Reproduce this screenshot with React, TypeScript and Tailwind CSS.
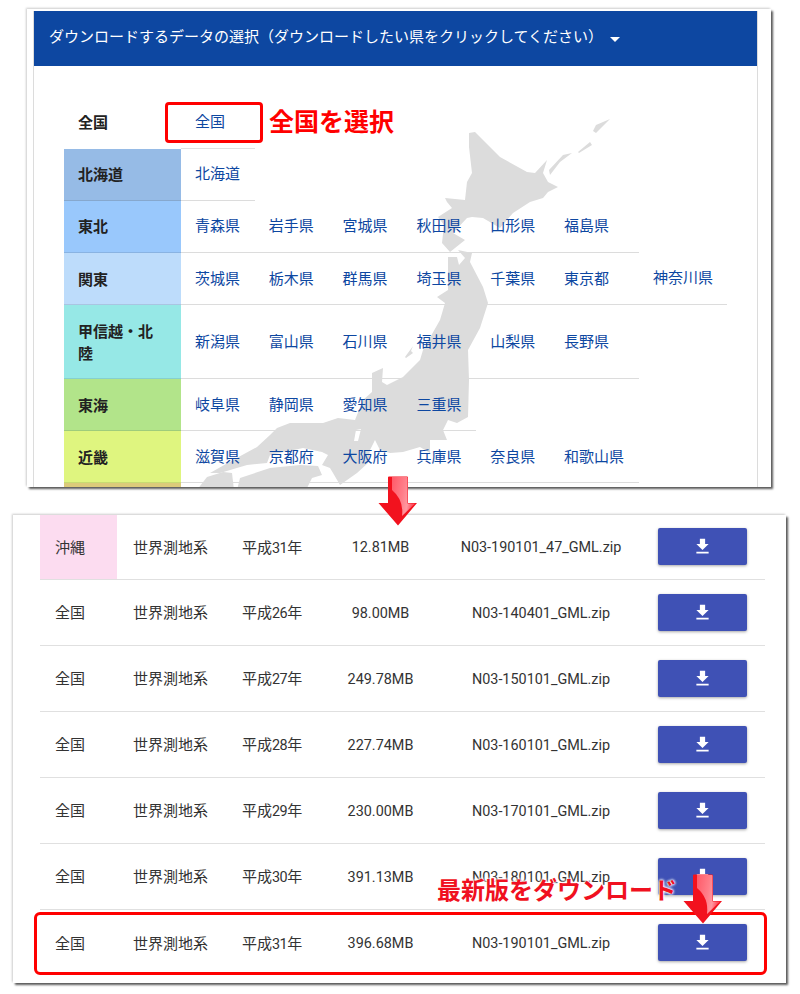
const prefRows: { label: string; bg: string; h: string; cells: string[] }[] = [
  { label: "北海道", bg: "bg-[#96bbe6]", h: "h-[52px]", cells: ["北海道"] },
  { label: "東北", bg: "bg-[#99c8fc]", h: "h-[52px]", cells: ["青森県", "岩手県", "宮城県", "秋田県", "山形県", "福島県"] },
  { label: "関東", bg: "bg-[#bddcfb]", h: "h-[52px]", cells: ["茨城県", "栃木県", "群馬県", "埼玉県", "千葉県", "東京都", "神奈川県"] },
  { label: "甲信越・北陸", bg: "bg-[#96e8e6]", h: "h-[74px]", cells: ["新潟県", "富山県", "石川県", "福井県", "山梨県", "長野県"] },
  { label: "東海", bg: "bg-[#b2e48a]", h: "h-[52px]", cells: ["岐阜県", "静岡県", "愛知県", "三重県"] },
  { label: "近畿", bg: "bg-[#dff57f]", h: "h-[52px]", cells: ["滋賀県", "京都府", "大阪府", "兵庫県", "奈良県", "和歌山県"] },
];

const files = [
  { area: "沖縄", year: "31", size: "12.81MB", file: "N03-190101_47_GML.zip" },
  { area: "全国", year: "26", size: "98.00MB", file: "N03-140401_GML.zip" },
  { area: "全国", year: "27", size: "249.78MB", file: "N03-150101_GML.zip" },
  { area: "全国", year: "28", size: "227.74MB", file: "N03-160101_GML.zip" },
  { area: "全国", year: "29", size: "230.00MB", file: "N03-170101_GML.zip" },
  { area: "全国", year: "30", size: "391.13MB", file: "N03-180101_GML.zip" },
  { area: "全国", year: "31", size: "396.68MB", file: "N03-190101_GML.zip" },
];

function cellWidth(i: number) {
  return i === 5 ? "w-[89px]" : i === 6 ? "w-[88px]" : "w-[73.8px]";
}

function JapanMap() {
  return (
    <svg className="absolute left-0 top-0 h-full w-full" viewBox="27 9 744 478" fill="#dcdcdc">
      <path d="M469 133L475 132L500 157L527 172L535 173L547 160L543 173L548 182L558 187L548 192L543 198L530 202L513 213L500 228L483 218L472 217L467 218L453 233L465 240L450 252L442 243L444 225L438 217L452 208L447 202L445 198L465 200L467 182L472 173L469 147Z" />
      <path d="M550 175L549 170L563 155L572 153L560 162Z" />
      <path d="M578 152L590 142L592 145L579 153Z" />
      <path d="M593 131L596 125L610 119L596 133Z" />
      <path d="M448 257L457 257L459 265L465 258L458 250L472 253L470 262L483 287L488 303L480 328L468 350L469 380L468 417L457 423L448 420L443 430L447 440L438 440L430 440L430 453L420 447L403 452L390 453L380 450L375 440L370 450L368 463L357 473L340 485L333 473L330 468L322 465L328 455L322 452L303 448L270 455L267 463L247 465L220 473L210 473L233 460L257 447L270 435L277 428L290 423L323 423L338 418L355 420L363 400L372 392L372 373L383 368L382 382L387 385L403 377L420 360L423 350L440 320L445 303L437 297L448 290Z" />
      <path fill="#ffffff" d="M356 430L361 429L358 441L354 441Z" />
      <path d="M405 357L413 346L411 351L413 353L406 358Z" />
      <path d="M237 490L240 478L270 468L300 465L318 466L322 475L312 478L306 490Z" />
      <path d="M197 490L207 477L223 472L232 473L234 490Z" />
    </svg>
  );
}

function Arrow({ id, className }: { id: string; className: string }) {
  return (
    <svg className={`absolute ${className}`} viewBox="0 0 40 50">
      <defs>
        <linearGradient id={id} x1="0" y1="0" x2="1" y2="0.3">
          <stop offset="0" stopColor="#ff5a68" />
          <stop offset="0.55" stopColor="#ff7f8a" />
          <stop offset="0.8" stopColor="#ff98a0" />
          <stop offset="1" stopColor="#ff5060" />
        </linearGradient>
      </defs>
      <path d="M10 1.5Q10 0.5 11 0.5H29Q30 0.5 30 1.5V27H39L20 49.5L0.5 27H10Z" fill="#f2121e" />
      <path d="M14 1H29Q29.5 1 29.5 2V27.5H37L24 40Q26 24 14 14Z" fill={`url(#${id})`} />
    </svg>
  );
}

export default function App() {
  return (
    <div className="relative h-[994px] w-[800px] overflow-hidden bg-white pt-[9px] font-['Roboto','Noto_Sans_CJK_JP',sans-serif] text-[15px] text-[#333]">
      <section className="relative ml-[27px] h-[478px] w-[744px] overflow-hidden bg-white shadow-[2px_2px_2px_rgba(0,0,0,0.65),-1px_-1px_2px_rgba(0,0,0,0.2)]">
        <JapanMap />
        <div className="relative ml-[6px] mt-[2px] h-[480px] w-[725px] border-x border-[#dcdcdc]">
          <div className="flex h-[55px] items-center bg-[#0d47a1] pb-[4px] pl-[15px] text-white">
            <span className="font-['Noto_Sans_CJK_JP',sans-serif]">ダウンロードするデータの選択（ダウンロードしたい県をクリックしてください）</span>
            <span className="ml-[7px] mt-[6px] h-0 w-0 border-x-[5px] border-t-[5px] border-x-transparent border-t-white" />
          </div>
          <div className="ml-[30px] mt-[31px] w-[664px]">
            <div className="flex h-[52px]">
              <div className="flex w-[117px] items-center pl-[14px] font-bold text-[#222]">全国</div>
              <div className="flex w-[74px] items-center border-b border-[#e0e0e0] pl-[14px] text-[#0d47a1]">全国</div>
            </div>
            {prefRows.map((row, r) => (
              <div key={row.label} className={`flex ${row.h}`}>
                <div className={`flex w-[117px] items-center border-b border-black/10 pl-[14px] pr-[15px] font-bold leading-[22px] text-[#222] ${r >= 2 ? "pt-[2px]" : ""} ${row.bg}`}>{row.label}</div>
                {row.cells.map((c, i) => (
                  <div key={c} className={`flex items-center border-b border-[#dcdcdc] pl-[14px] text-[#0d47a1] ${r >= 2 && i < 6 ? "pt-[2px]" : ""} ${cellWidth(i)}`}>
                    {c}
                  </div>
                ))}
              </div>
            ))}
            <div className="h-[10px] w-[117px] bg-[#dccb7a]" />
          </div>
        </div>
      </section>

      <section className="relative ml-[13px] mt-[28px] h-[468px] w-[773px] bg-white pl-[27px] shadow-[2px_2px_2px_rgba(0,0,0,0.65),-1px_-1px_2px_rgba(0,0,0,0.2)]">
        {files.map((f, i) => (
          <div key={i} className={`flex w-[725px] items-center border-b border-[#e0e0e0] ${i === 0 ? "h-[65px]" : "h-[66px]"} ${i === files.length - 1 ? "border-b-0" : ""}`}>
            <div className={`flex h-full w-[77px] items-center pl-[15px] pt-[2px] ${i === 0 ? "bg-[#fcdcf0]" : ""}`}>{f.area}</div>
            <div className="w-[108px] pl-[16px] pt-[2px]">世界測地系</div>
            <div className="w-[110px] pl-[17px] pt-[2px]">
              平成<span className="text-[14.4px] tracking-[-0.5px]">{f.year}</span>年
            </div>
            <div className="w-[91px] pt-[2px] text-center text-[14.4px]">{f.size}</div>
            <div className="w-[230px] pt-[2px] text-center text-[14.4px]">{f.file}</div>
            <button className={`ml-[2px] flex h-[37px] w-[89px] items-center justify-center rounded-[2px] bg-[#3f51b5] text-white shadow-[0_1px_3px_rgba(0,0,0,0.35)] ${i === 0 || i === files.length - 1 ? "mb-[1px]" : ""}`}>
              <svg width="21" height="21" viewBox="0 0 24 24" fill="currentColor">
                <path d="M19 9h-4V3H9v6H5l7 7 7-7zM5 18v2h14v-2H5z" />
              </svg>
            </button>
          </div>
        ))}
      </section>

      <div className="absolute left-[165px] top-[102px] h-[41px] w-[98px] rounded-[4px] border-[3px] border-[#ff0000]" />
      <div className="absolute left-[269px] top-[102px] font-['Noto_Sans_CJK_JP',sans-serif] text-[25px] leading-[36px] font-bold text-[#ff0000]">全国を選択</div>
      <div className="absolute left-[34px] top-[912px] h-[63px] w-[733px] rounded-[6px] border-[3px] border-[#ff0000]" />
      <div className="absolute left-[437px] top-[871px] font-['Noto_Sans_CJK_JP',sans-serif] text-[24px] leading-[36px] font-bold whitespace-nowrap text-[#f01020] [text-shadow:0_0_3px_#fff,0_0_3px_#fff,0_0_3px_#fff]">最新版をダウンロード</div>
      <Arrow id="arrowTop" className="left-[378px] top-[476px] h-[50px] w-[40px]" />
      <Arrow id="arrowBottom" className="left-[683px] top-[874px] h-[50px] w-[40px]" />
    </div>
  );
}
